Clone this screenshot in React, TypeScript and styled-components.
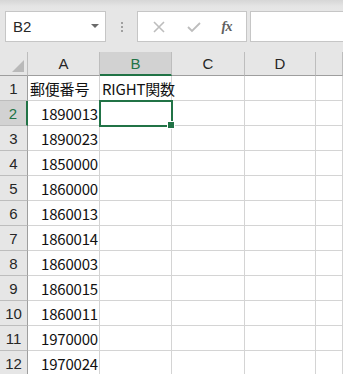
import React from "react";
import styled, { createGlobalStyle } from "styled-components";

const Global = createGlobalStyle`
  html, body { margin: 0; padding: 0; background: #ffffff; }
  body { font-family: "Noto Sans CJK JP", "Noto Sans", sans-serif; overflow: hidden; }
`;

const Page = styled.div`
  width: 343px;
  height: 374px;
  overflow: hidden;
  display: flex;
  flex-direction: column;
  background: #ffffff;
`;

const Toolbar = styled.div`
  height: 52px;
  flex: none;
  box-sizing: border-box;
  padding: 11px 0 0 5px;
  display: flex;
  align-items: flex-start;
  background: linear-gradient(#d6d6d6 0px, #e4e4e4 6px, #e6e6e6 10px);
`;

const NameBox = styled.div`
  width: 101px;
  height: 31px;
  box-sizing: border-box;
  border: 1px solid #c6c6c6;
  background: #ffffff;
  display: flex;
  align-items: center;
  justify-content: space-between;
  padding: 0 6px 0 7px;
  font-family: "Liberation Sans", Arial, sans-serif;
  font-size: 15px;
  color: #262626;
`;

const Caret = styled.span`
  width: 0;
  height: 0;
  border-left: 4px solid transparent;
  border-right: 4px solid transparent;
  border-top: 4px solid #6a6a6a;
  margin-top: -2px;
`;

const Dots = styled.div`
  width: 31px;
  height: 31px;
  display: flex;
  flex-direction: column;
  align-items: center;
  justify-content: center;
  gap: 2px;
`;

const Dot = styled.span`
  width: 2px;
  height: 2px;
  background: #a0a0a0;
`;

const FxBox = styled.div`
  width: 110px;
  height: 31px;
  box-sizing: border-box;
  border: 1px solid #c6c6c6;
  background: #ffffff;
  display: flex;
  align-items: center;
  justify-content: space-around;
  padding: 0 4px;
`;

const FxText = styled.span`
  font-family: "Liberation Serif", "Times New Roman", serif;
  font-style: italic;
  font-weight: bold;
  font-size: 14px;
  color: #606060;
  letter-spacing: -0.5px;
`;

const FormulaInput = styled.div`
  flex: 1;
  margin-left: 3px;
  height: 31px;
  box-sizing: border-box;
  border: 1px solid #c6c6c6;
  border-right: none;
  background: #ffffff;
`;

const Sheet = styled.div`
  position: relative;
  display: grid;
  grid-template-columns: 28px 72px 72px 73px 71px 1fr;
  grid-auto-rows: 25px;
  grid-template-rows: 24px;
`;

const Corner = styled.div`
  position: relative;
  background: #e6e6e6;
  border-right: 1px solid #bdbdbd;
  border-bottom: 1px solid #9e9e9e;
  box-sizing: border-box;
`;

const Triangle = styled.div`
  position: absolute;
  right: 3px;
  bottom: 3px;
  width: 0;
  height: 0;
  border-left: 12px solid transparent;
  border-bottom: 12px solid #b9b9b9;
`;

const ColHead = styled.div<{ $sel?: boolean }>`
  box-sizing: border-box;
  background: ${(p) => (p.$sel ? "#d2d2d2" : "#e6e6e6")};
  border-right: 1px solid #bdbdbd;
  border-bottom: ${(p) => (p.$sel ? "2px solid #217346" : "1px solid #9e9e9e")};
  display: flex;
  align-items: center;
  justify-content: center;
  padding-top: ${(p) => (p.$sel ? "1px" : "0")};
  font-family: "Liberation Sans", Arial, sans-serif;
  font-size: 15px;
  color: ${(p) => (p.$sel ? "#217346" : "#262626")};
`;

const RowHead = styled.div<{ $sel?: boolean }>`
  box-sizing: border-box;
  background: ${(p) => (p.$sel ? "#d2d2d2" : "#e6e6e6")};
  border-right: ${(p) => (p.$sel ? "2px solid #217346" : "1px solid #9e9e9e")};
  border-bottom: 1px solid #bdbdbd;
  display: flex;
  align-items: center;
  justify-content: center;
  font-family: "Liberation Sans", Arial, sans-serif;
  font-size: 15px;
  color: ${(p) => (p.$sel ? "#217346" : "#262626")};
`;

const Cell = styled.div<{ $num?: boolean }>`
  box-sizing: border-box;
  border-right: 1px solid #d4d4d4;
  border-bottom: 1px solid #d4d4d4;
  display: flex;
  align-items: center;
  justify-content: ${(p) => (p.$num ? "flex-end" : "flex-start")};
  padding: ${(p) => (p.$num ? "0 1px 0 0" : "0 0 0 2px")};
  font-family: "Noto Sans CJK JP", sans-serif;
  font-size: 15px;
  color: #111111;
  white-space: nowrap;
  overflow: visible;
  letter-spacing: -0.2px;
`;

const Selection = styled.div`
  position: absolute;
  left: 99px;
  top: 48px;
  width: 74px;
  height: 27px;
  box-sizing: border-box;
  border: 2px solid #217346;
  pointer-events: none;
`;

const Handle = styled.div`
  position: absolute;
  right: -4px;
  bottom: -4px;
  width: 6px;
  height: 6px;
  background: #217346;
  border: 1px solid #ffffff;
`;

const cols = ["A", "B", "C", "D", ""];
const rows: [string, string][] = [
  ["郵便番号", "RIGHT関数"],
  ["1890013", ""],
  ["1890023", ""],
  ["1850000", ""],
  ["1860000", ""],
  ["1860013", ""],
  ["1860014", ""],
  ["1860003", ""],
  ["1860015", ""],
  ["1860011", ""],
  ["1970000", ""],
  ["1970024", ""],
];

export default function App() {
  return (
    <Page>
      <Global />
      <Toolbar>
        <NameBox>
          <span>B2</span>
          <Caret />
        </NameBox>
        <Dots>
          <Dot />
          <Dot />
          <Dot />
        </Dots>
        <FxBox>
          <svg width="14" height="14" viewBox="0 0 14 14">
            <path d="M2 2 L12 12 M12 2 L2 12" stroke="#bdbdbd" strokeWidth="1.6" fill="none" />
          </svg>
          <svg width="16" height="14" viewBox="0 0 16 14">
            <path d="M2 7 L6 11 L14 3" stroke="#bdbdbd" strokeWidth="1.8" fill="none" />
          </svg>
          <FxText>fx</FxText>
        </FxBox>
        <FormulaInput />
      </Toolbar>
      <Sheet>
        <Corner>
          <Triangle />
        </Corner>
        {cols.map((c, i) => (
          <ColHead key={i} $sel={c === "B"}>
            {c}
          </ColHead>
        ))}
        {rows.map((r, i) => (
          <React.Fragment key={i}>
            <RowHead $sel={i === 1}>{i + 1}</RowHead>
            <Cell $num={i > 0}>{r[0]}</Cell>
            <Cell>{r[1]}</Cell>
            <Cell />
            <Cell />
            <Cell />
          </React.Fragment>
        ))}
        <Selection>
          <Handle />
        </Selection>
      </Sheet>
    </Page>
  );
}
